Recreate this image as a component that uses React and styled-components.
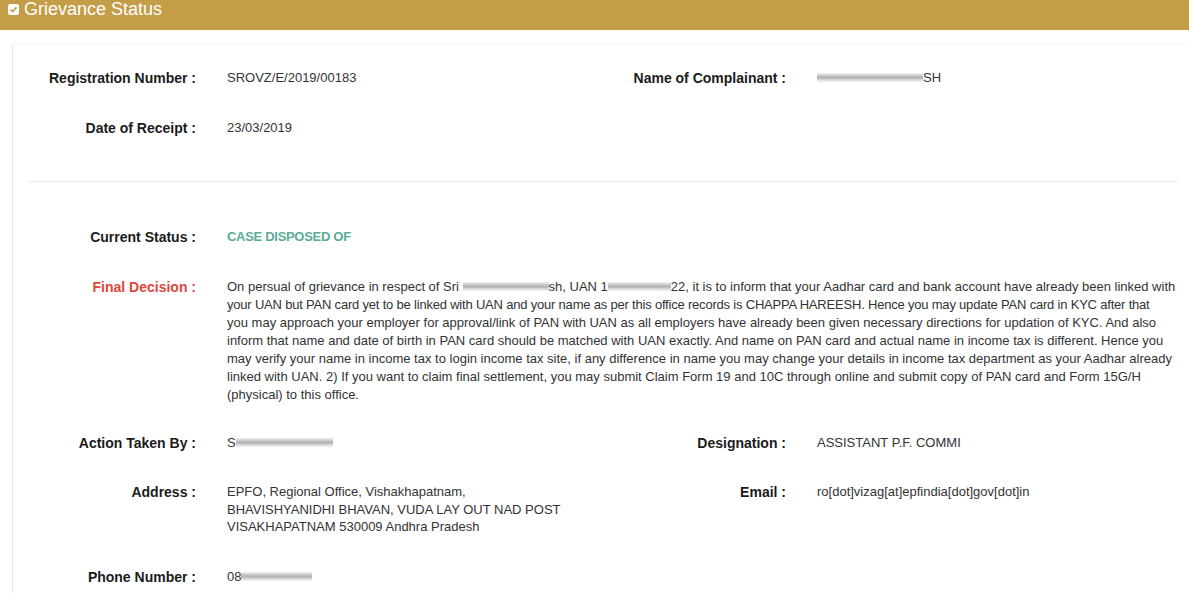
import React from 'react';
import styled, { createGlobalStyle } from 'styled-components';

const GlobalStyle = createGlobalStyle`
  html, body {
    margin: 0;
    padding: 0;
    background: #fff;
    font-family: "Liberation Sans", Arial, sans-serif;
  }
`;

const Header = styled.div`
  height: 30px;
  background: #c49d48;
  display: flex;
  align-items: flex-start;
  gap: 5px;
  padding: 0 0 0 8px;
  box-sizing: border-box;
`;

const CheckIcon = styled.svg`
  margin-top: 4px;
  flex: none;
`;

const Title = styled.h2`
  margin: 0;
  font-size: 18px;
  line-height: 18px;
  font-weight: normal;
  color: #fff;
`;

const Panel = styled.div`
  margin: 14px 0 0 12px;
  padding: 24px 11px 0 16px;
  border-left: 1px solid #e6e6e6;
  border-top: 1px solid #f4f4f4;
  min-height: 560px;
  box-sizing: border-box;
`;

const Row = styled.div`
  display: grid;
  grid-template-columns: 167px 1fr 167px 1fr;
  column-gap: 31px;
  margin-bottom: ${(p) => (p.$gap ? p.$gap : 32)}px;
  font-size: 13px;
  line-height: 18px;
`;

const Label = styled.div`
  text-align: right;
  font-size: 14px;
  font-weight: bold;
  color: ${(p) => (p.$alert ? '#e0463c' : '#1b1b1b')};
`;

const Value = styled.div`
  color: ${(p) => (p.$status ? '#5aac97' : '#333')};
  font-weight: ${(p) => (p.$status ? 'bold' : 'normal')};
  letter-spacing: ${(p) => (p.$status ? '-0.3px' : 'normal')};
  grid-column: ${(p) => (p.$wide ? '2 / -1' : 'auto')};
  line-height: ${(p) => (p.$tight ? '17.5px' : '18px')};
`;

const Line = styled.span`
  display: block;
  white-space: nowrap;
  letter-spacing: ${(p) => (p.$squeeze ? '-0.2px' : 'normal')};
`;

const Divider = styled.hr`
  border: 0;
  border-top: 1px solid #ececec;
  margin: 44px 0 46px;
`;

const Blur = styled.span`
  display: inline-block;
  width: ${(p) => p.$w}px;
  height: 9px;
  vertical-align: middle;
  margin-top: -2px;
  background: linear-gradient(180deg, #f0f0f0 0%, #b4b4b4 35%, #9c9c9c 55%, #d2d2d2 75%, #f2f2f2 100%);
  filter: blur(0.7px);
  opacity: 0.8;
`;

export default function App() {
  return (
    <>
      <GlobalStyle />
      <Header>
        <CheckIcon width="11" height="11" viewBox="0 0 11 11">
          <rect x="0" y="0" width="11" height="11" rx="2" fill="#fff" />
          <path d="M2.6 5.6 L4.6 7.6 L8.4 3.4" fill="none" stroke="#c49d48" strokeWidth="1.7" />
        </CheckIcon>
        <Title>Grievance Status</Title>
      </Header>
      <Panel>
        <Row>
          <Label>Registration Number :</Label>
          <Value>SROVZ/E/2019/00183</Value>
          <Label>Name of Complainant :</Label>
          <Value>
            <Blur $w={106} />SH
          </Value>
        </Row>
        <Row>
          <Label>Date of Receipt :</Label>
          <Value>23/03/2019</Value>
        </Row>
        <Divider />
        <Row>
          <Label>Current Status :</Label>
          <Value $status>CASE DISPOSED OF</Value>
        </Row>
        <Row $gap={30}>
          <Label $alert>Final Decision :</Label>
          <Value $wide>
            <Line>
              On persual of grievance in respect of Sri <Blur $w={86} />sh, UAN 1<Blur $w={63} />22, it is to inform
              that your Aadhar card and bank account have already been linked with
            </Line>
            <Line $squeeze>
              your UAN but PAN card yet to be linked with UAN and your name as per this office records is CHAPPA
              HAREESH. Hence you may update PAN card in KYC after that
            </Line>
            <Line>
              you may approach your employer for approval/link of PAN with UAN as all employers have already been
              given necessary directions for updation of KYC. And also
            </Line>
            <Line>
              inform that name and date of birth in PAN card should be matched with UAN exactly. And name on PAN
              card and actual name in income tax is different. Hence you
            </Line>
            <Line>
              may verify your name in income tax to login income tax site, if any difference in name you may change
              your details in income tax department as your Aadhar already
            </Line>
            <Line>
              linked with UAN. 2) If you want to claim final settlement, you may submit Claim Form 19 and 10C
              through online and submit copy of PAN card and Form 15G/H
            </Line>
            <Line>(physical) to this office.</Line>
          </Value>
        </Row>
        <Row $gap={31}>
          <Label>Action Taken By :</Label>
          <Value>
            S<Blur $w={97} />
          </Value>
          <Label>Designation :</Label>
          <Value>ASSISTANT P.F. COMMI</Value>
        </Row>
        <Row $gap={32}>
          <Label>Address :</Label>
          <Value $tight>
            EPFO, Regional Office, Vishakhapatnam,
            <br />
            BHAVISHYANIDHI BHAVAN, VUDA LAY OUT NAD POST
            <br />
            VISAKHAPATNAM 530009 Andhra Pradesh
          </Value>
          <Label>Email :</Label>
          <Value>ro[dot]vizag[at]epfindia[dot]gov[dot]in</Value>
        </Row>
        <Row>
          <Label>Phone Number :</Label>
          <Value>
            08<Blur $w={71} />
          </Value>
        </Row>
      </Panel>
    </>
  );
}
